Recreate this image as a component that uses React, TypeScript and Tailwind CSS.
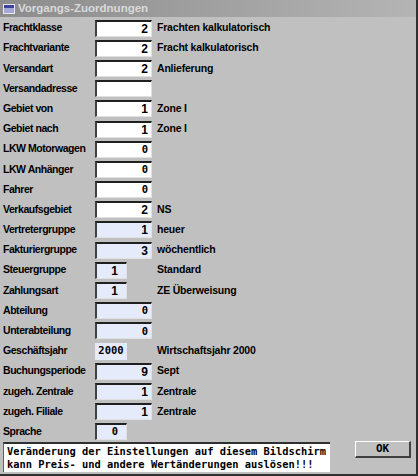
import React from "react";

type Row = {
  label: string;
  value: string;
  text?: string;
  narrow?: boolean;
  blue?: boolean;
  flat?: boolean;
};

const ROWS: Row[] = [
  { label: "Frachtklasse", value: "2", text: "Frachten kalkulatorisch" },
  { label: "Frachtvariante", value: "2", text: "Fracht kalkulatorisch" },
  { label: "Versandart", value: "2", text: "Anlieferung" },
  { label: "Versandadresse", value: "" },
  { label: "Gebiet von", value: "1", text: "Zone I" },
  { label: "Gebiet nach", value: "1", text: "Zone I" },
  { label: "LKW Motorwagen", value: "0" },
  { label: "LKW Anhänger", value: "0" },
  { label: "Fahrer", value: "0" },
  { label: "Verkaufsgebiet", value: "2", text: "NS" },
  { label: "Vertretergruppe", value: "1", text: "heuer", blue: true },
  { label: "Fakturiergruppe", value: "3", text: "wöchentlich", blue: true },
  { label: "Steuergruppe", value: "1", text: "Standard", blue: true, narrow: true },
  { label: "Zahlungsart", value: "1", text: "ZE Überweisung", blue: true, narrow: true },
  { label: "Abteilung", value: "0", blue: true },
  { label: "Unterabteilung", value: "0", blue: true },
  { label: "Geschäftsjahr", value: "2000", text: "Wirtschaftsjahr 2000", blue: true, narrow: true, flat: true },
  { label: "Buchungsperiode", value: "9", text: "Sept", blue: true },
  { label: "zugeh. Zentrale", value: "1", text: "Zentrale", blue: true },
  { label: "zugeh. Filiale", value: "1", text: "Zentrale", blue: true },
  { label: "Sprache", value: "0", blue: true, narrow: true },
];

function Value({ v }: { v: string }) {
  // zeros are drawn in the fixed system font, other digits in the sans face
  if (/^[0-9]+$/.test(v) && v.includes("0")) {
    return <span className="font-['DejaVu_Sans_Mono',monospace] text-[10.5px] font-bold">{v}</span>;
  }
  return <span>{v}</span>;
}

function Field({ row }: { row: Row }) {
  const width = row.narrow ? "w-[32px]" : "w-[57px]";
  const bg = row.blue ? "bg-[#e6ebfb]" : "bg-white";
  const border = row.flat
    ? "border-0 justify-center"
    : "border-t-2 border-l-2 border-t-[#202020] border-l-[#404040] border-b border-r border-b-[#e0e0e0] border-r-[#e0e0e0] justify-end";
  const pad = row.flat ? "" : row.narrow ? "pr-[8px]" : "pr-[3px]";
  return (
    <div
      className={`${width} ${bg} ${border} ${pad} shrink-0 h-[17px] flex items-center text-[12px] font-bold text-black`}
    >
      <Value v={row.value} />
    </div>
  );
}

export default function App() {
  return (
    <div className="w-[418px] h-[476px] bg-[#c0c0c0] flex flex-col font-['Liberation_Sans',Arial,sans-serif] border-r-2 border-r-[#303030] border-b-2 border-b-[#303030] overflow-hidden">
      <div className="h-[17px] shrink-0 bg-gradient-to-r from-[#8c8c8c] to-[#b4b4b4] flex items-center pl-[3px] gap-[3px]">
        <div className="w-[12px] h-[10px] border border-[#e8e8e8] bg-[#a8a8d8] flex flex-col">
          <div className="h-[3px] bg-[#4040a0]" />
        </div>
        <span className="text-[11.5px] font-bold text-[#dadada]">Vorgangs-Zuordnungen</span>
      </div>

      <div className="flex flex-col pt-[1px]">
        {ROWS.map((row) => (
          <div key={row.label} className="h-[20.2px] flex items-center">
            <div className="w-[95px] shrink-0 pl-[3px] text-[10.5px] tracking-[-0.45px] font-bold text-black whitespace-nowrap">
              {row.label}
            </div>
            <Field row={row} />
            <div
              className={`${row.narrow ? "pl-[30px]" : "pl-[5px]"} text-[10.5px] tracking-[-0.2px] font-bold text-black whitespace-nowrap`}
            >
              {row.text}
            </div>
          </div>
        ))}
      </div>

      <div className="flex items-start">
        <div className="ml-[3px] w-[327px] h-[30px] bg-white border-t-2 border-l border-t-[#303030] border-l-[#606060] font-['DejaVu_Sans_Mono','Liberation_Mono',monospace] text-[10.4px] font-bold leading-[13px] text-black pl-[3px] pt-[1px] whitespace-nowrap">
          <div>Veränderung der Einstellungen auf diesem Bildschirm</div>
          <div>kann Preis- und andere Wertänderungen auslösen!!!</div>
        </div>
        <button className="ml-[25px] mt-[-1px] w-[56px] h-[17px] bg-[#c0c0c0] border-t border-l border-t-white border-l-white border-b-2 border-r-2 border-b-[#404040] border-r-[#404040] font-['DejaVu_Sans_Mono',monospace] text-[11px] font-bold text-black flex items-center justify-center">
          OK
        </button>
      </div>
    </div>
  );
}
